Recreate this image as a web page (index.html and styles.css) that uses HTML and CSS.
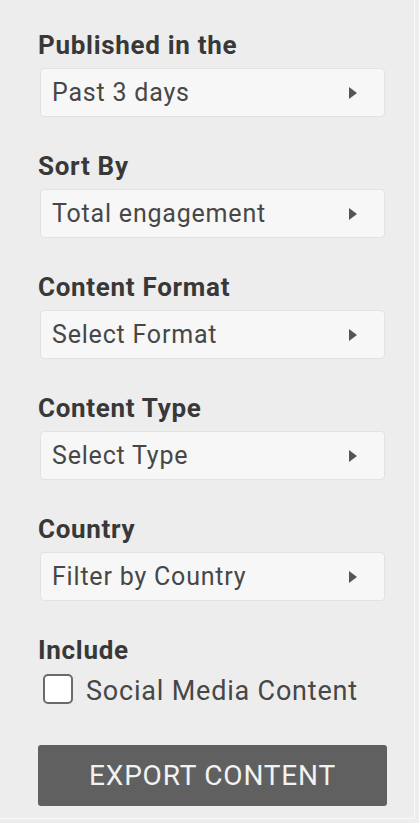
FILE: index.html
```html
<!DOCTYPE html>
<html lang="en">
<head>
    <meta charset="UTF-8">
    <meta name="viewport" content="width=device-width, initial-scale=1.0">
    <title>Content Filters</title>
    <link rel="stylesheet" href="styles.css">
</head>
<body>
    <div class="panel">
        <div class="filter-group">
            <div class="filter-label">Published in the</div>
            <div class="select-box">
                <span>Past 3 days</span>
                <span class="arrow"></span>
            </div>
        </div>

        <div class="filter-group">
            <div class="filter-label">Sort By</div>
            <div class="select-box">
                <span>Total engagement</span>
                <span class="arrow"></span>
            </div>
        </div>

        <div class="filter-group">
            <div class="filter-label">Content Format</div>
            <div class="select-box">
                <span>Select Format</span>
                <span class="arrow"></span>
            </div>
        </div>

        <div class="filter-group">
            <div class="filter-label">Content Type</div>
            <div class="select-box">
                <span>Select Type</span>
                <span class="arrow"></span>
            </div>
        </div>

        <div class="filter-group">
            <div class="filter-label">Country</div>
            <div class="select-box">
                <span>Filter by Country</span>
                <span class="arrow"></span>
            </div>
        </div>

        <div class="filter-group include">
            <div class="filter-label">Include</div>
            <label class="check-row">
                <span class="check-box"></span>
                <span class="check-text">Social Media Content</span>
            </label>
        </div>

        <button class="export-btn">EXPORT CONTENT</button>
    </div>
</body>
</html>
```

FILE: styles.css
```css
body {
    font-family: Roboto, "Liberation Sans", sans-serif;
    margin: 0;
    background-color: #ededed;
}
.panel {
    width: 415px;
    height: 819px;
    box-sizing: border-box;
    padding: 30px 29px 0 38px;
    border-right: 1px solid #fafafa;
    border-bottom: 1px solid #fafafa;
    display: flex;
    flex-direction: column;
}
.filter-group {
    margin-bottom: 34px;
}
.filter-label {
    font-size: 26px;
    font-weight: bold;
    letter-spacing: 0.7px;
    color: #383838;
    line-height: 30px;
    margin-bottom: 8px;
}
.select-box {
    display: flex;
    align-items: center;
    justify-content: space-between;
    margin-left: 2px;
    height: 49px;
    box-sizing: border-box;
    padding: 0 27px 0 11px;
    background: #f7f7f7;
    border: 1px solid #e2e2e2;
    border-radius: 4px;
    font-size: 25px;
    letter-spacing: 0.8px;
    color: #474747;
}
.arrow {
    width: 0;
    height: 0;
    border-top: 6.5px solid transparent;
    border-bottom: 6.5px solid transparent;
    border-left: 8px solid #555;
}
.include {
    margin-bottom: 0;
}
.check-row {
    display: flex;
    align-items: center;
    gap: 13px;
    margin-top: -1px;
    margin-left: 5px;
    height: 34px;
    font-size: 27px;
    letter-spacing: 0.8px;
    color: #474747;
}
.check-box {
    width: 26px;
    height: 26px;
    border: 2px solid #6a6a6a;
    border-radius: 5px;
    background: #fff;
}
.check-text {
    padding-top: 4px;
}
.export-btn {
    margin-top: 39px;
    height: 61px;
    width: 349px;
    border: none;
    border-radius: 3px;
    background: #606060;
    color: #f2f2f2;
    font-family: Roboto, "Liberation Sans", sans-serif;
    font-size: 28px;
    letter-spacing: 0.8px;
}
```
